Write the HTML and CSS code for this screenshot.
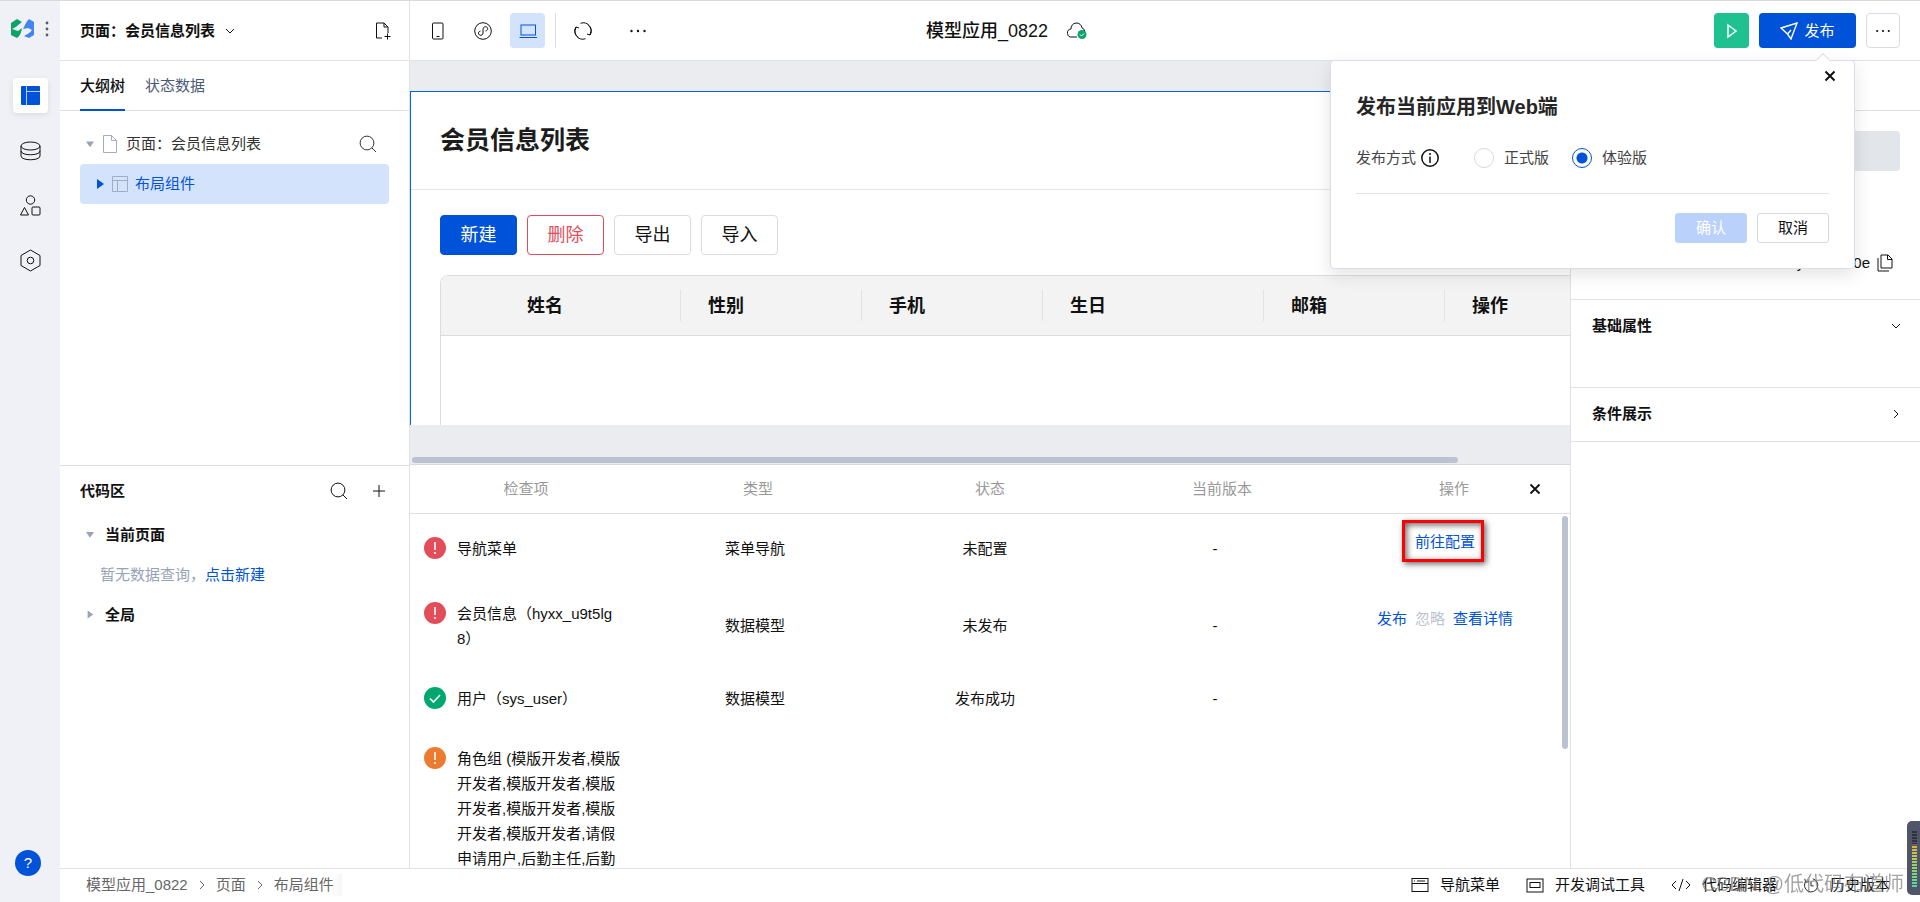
FILE: index.html
```html
<!DOCTYPE html>
<html lang="zh-CN">
<head>
<meta charset="utf-8">
<title>模型应用_0822</title>
<link rel="stylesheet" href="styles.css">
</head>
<body>
<svg class="defs" aria-hidden="true">
  <symbol id="search" viewBox="0 0 18 18"><circle cx="8" cy="8" r="6.900"/><path d="M13 13l4 4"/></symbol>
  <symbol id="close" viewBox="0 0 12 12"><path d="M1.500 1.500l9 9M10.500 1.500l-9 9"/></symbol>
  <symbol id="more" viewBox="0 0 18 18"><g fill="currentColor" stroke="none"><circle cx="2.500" cy="9" r="1.200"/><circle cx="9" cy="9" r="1.200"/><circle cx="15.500" cy="9" r="1.200"/></g></symbol>
  <symbol id="chev-right" viewBox="0 0 10 10"><path d="M3 1l4 4-4 4"/></symbol>
  <symbol id="chev-down" viewBox="0 0 10 10"><path d="M1 3l4 4 4-4"/></symbol>
  <symbol id="alert" viewBox="0 0 22 22"><circle cx="11" cy="11" r="11" fill="currentColor" stroke="none"/><path d="M11 5v8M11 15v2" stroke="#fff" stroke-width="1.600"/></symbol>
</svg>
<div class="app">
  <nav class="rail" aria-label="主导航">
    <div class="brand">
      <svg width="24" height="20" viewBox="0 0 24 20"><path fill="#0ba56b" d="M0 4l6-4 5 3C8 5 6 8 1 10l6 2 4-3c-1 5-2 8-5 10l-6-3z"/><path fill="#4285ee" d="M18 0l5 3v13l-5 3-5-2c3-2 6-3 8-6l-4-2-5 1c2-4 3-7 6-10z"/></svg>
      <svg width="4" height="16" viewBox="0 0 4 16"><g fill="#555b6a"><circle cx="2" cy="2" r="1.400"/><circle cx="2" cy="8" r="1.400"/><circle cx="2" cy="14" r="1.400"/></g></svg>
    </div>
    <button class="rail-btn active" aria-label="页面设计"><svg width="19" height="19" viewBox="0 0 19 19"><rect width="19" height="19" rx="1" fill="#0052d9" stroke="none"/><path d="M5.500 0v19M5.500 5.500H19" stroke="#b5ccf5"/></svg></button>
    <button class="rail-btn" aria-label="数据源"><svg width="21" height="20" viewBox="0 0 21 20"><ellipse cx="10.500" cy="5" rx="9.500" ry="4"/><path d="M1 5v10c0 5 19 5 19 0V5M1 10c0 5 19 5 19 0"/></svg></button>
    <button class="rail-btn" aria-label="组件"><svg width="21" height="21" viewBox="0 0 21 21"><circle cx="10.500" cy="5" r="4.200"/><path d="M4.500 12.500l4 7.500h-8z"/><rect x="12" y="12" width="8" height="8" rx="1"/></svg></button>
    <button class="rail-btn" aria-label="设置"><svg width="21" height="23" viewBox="0 0 21 23"><path d="M10.500 1L20 6.500v10L10.500 22 1 16.500v-10z"/><circle cx="10.500" cy="11.500" r="3.300"/></svg></button>
    <button class="help" aria-label="帮助">?</button>
  </nav>

  <header class="topbar">
    <div class="page-pick">
      <button class="page-name">页面：会员信息列表<svg width="10" height="10"><use href="#chev-down"/></svg></button>
      <button class="plain" aria-label="新建页面"><svg width="16" height="18" viewBox="0 0 16 18"><path d="M7 16H1.500V1H9l4 4v6M9 1v4h4M12.500 11.500v6M9.500 14.500h6"/></svg></button>
    </div>
    <div class="tools">
      <button class="tool" aria-label="手机"><svg width="18" height="18" viewBox="0 0 18 18"><rect x="3.500" y="1" width="10.500" height="16" rx="1"/><path d="M7.500 14.500h3"/></svg></button>
      <button class="tool" aria-label="小程序"><svg width="18" height="18" viewBox="0 0 18 18"><circle cx="9" cy="9" r="8.300"/><path d="M6.500 9C3.500 9.500 4 13.500 6.800 13.300 9 13.100 9 11.500 9 10V8c0-2 .5-3.300 2.500-3.300 2.800 0 3 3.700 0 4.300"/></svg></button>
      <button class="tool active" aria-label="桌面"><svg width="18" height="18" viewBox="0 0 18 18"><rect x="2" y="3" width="14.500" height="10"/><path d="M.5 15.500h17.500"/></svg></button>
      <span class="split"></span>
      <button class="tool refresh" aria-label="刷新"><svg width="18" height="18" viewBox="0 0 18 18"><path d="M6.500 1.300A8 8 0 0 1 16 13M11.500 16.700A8 8 0 0 1 2 5M4.500 15.700A8 8 0 0 1 2 5M13.500 2.300A8 8 0 0 1 16 13M2 5l-.8 3M2 5l3 1M16 13l.8-3M16 13l-3-1"/></svg></button>
      <button class="tool" aria-label="更多"><svg width="18" height="18"><use href="#more"/></svg></button>
    </div>
    <h1 class="app-name">模型应用_0822<svg width="20" height="18" viewBox="0 0 20 18"><path d="M10 15H5a4 4 0 0 1-1-8 5.500 5.500 0 0 1 11-1c1.500.5 2.500 1.500 2.700 3"/><circle cx="15" cy="12.500" r="4.500" fill="#0ba56b" stroke="none"/><path d="M13 12.500l1.500 1.500 2.500-2.500" stroke="#fff"/></svg></h1>
    <div class="actions">
      <button class="run" aria-label="预览"><svg width="14" height="16" viewBox="0 0 14 16"><path d="M3 2l8 6-8 6z"/></svg></button>
      <button class="publish"><svg width="18" height="18" viewBox="0 0 18 18"><path d="M1 6l16-5-6 16-3.500-5zM7.500 12l3.500-4"/></svg>发布</button>
      <button class="menu" aria-label="更多操作"><svg width="16" height="18"><use href="#more"/></svg></button>
    </div>
    <section class="popup">
      <span class="arrow"></span>
      <button class="plain popup-close" aria-label="关闭"><svg width="12" height="12"><use href="#close"/></svg></button>
      <h2>发布当前应用到Web端</h2>
      <div class="mode">
        <span class="mode-name">发布方式<svg width="18" height="18" viewBox="0 0 18 18"><circle cx="9" cy="9" r="8.200"/><path d="M9 7.500V14M9 4v2"/></svg></span>
        <label><input type="radio" name="mode">正式版</label>
        <label><input type="radio" name="mode" checked>体验版</label>
      </div>
      <div class="popup-foot"><button class="ok" disabled>确认</button><button>取消</button></div>
    </section>
  </header>

  <aside class="left">
    <section class="outline">
      <div class="tabs"><button class="tab on">大纲树</button><button class="tab">状态数据</button></div>
      <div class="tree">
        <div class="node"><i class="caret down"></i><svg class="soft" width="14" height="18" viewBox="0 0 14 18"><path d="M.5.5h8l5 5v12H.5zM8.500.5v5h5"/></svg>页面：会员信息列表<button class="plain find" aria-label="搜索"><svg width="18" height="18"><use href="#search"/></svg></button></div>
        <div class="node picked"><i class="caret"></i><svg class="soft" width="16" height="16" viewBox="0 0 16 16"><path d="M.5.5h15v15H.5zM.5 4.500h15M5.500 4.500v11"/></svg>布局组件</div>
      </div>
    </section>
    <section class="code">
      <div class="code-head"><b>代码区</b><button class="plain" aria-label="搜索代码"><svg width="18" height="18"><use href="#search"/></svg></button><button class="plain" aria-label="新增"><svg width="14" height="14" viewBox="0 0 14 14"><path d="M7 1v12M1 7h12"/></svg></button></div>
      <div class="group"><i class="caret down"></i><b>当前页面</b></div>
      <p class="hint">暂无数据查询，<a href="#">点击新建</a></p>
      <div class="group"><i class="caret"></i><b>全局</b></div>
    </section>
  </aside>

  <main class="center">
    <div class="stage">
      <div class="page">
        <h2 class="page-title">会员信息列表</h2>
        <div class="page-body">
          <div class="btns"><button class="primary">新建</button><button class="danger">删除</button><button>导出</button><button>导入</button></div>
          <table class="grid">
            <thead><tr><th class="pick"></th><th>姓名</th><th>性别</th><th>手机</th><th class="wide">生日</th><th>邮箱</th><th>操作</th></tr></thead>
            <tbody><tr><td colspan="7"></td></tr></tbody>
          </table>
        </div>
      </div>
      <div class="hbar"><span></span></div>
    </div>
    <section class="checks">
      <table class="check-table check-head"><thead><tr><th>检查项</th><th>类型</th><th>状态</th><th>当前版本</th><th>操作</th></tr></thead></table>
      <button class="plain checks-close" aria-label="关闭检查"><svg width="12" height="12"><use href="#close"/></svg></button>
      <div class="check-scroll">
        <table class="check-table">
          <tbody>
            <tr><td><div class="item red"><svg width="22" height="22"><use href="#alert"/></svg><span>导航菜单</span></div></td><td>菜单导航</td><td>未配置</td><td>-</td><td><div class="ops"><span class="marked"><a href="#">前往配置</a></span></div></td></tr>
            <tr><td><div class="item red"><svg width="22" height="22"><use href="#alert"/></svg><span>会员信息（hyxx_u9t5lg8）</span></div></td><td>数据模型</td><td>未发布</td><td>-</td><td><div class="ops"><a href="#">发布</a><span class="off">忽略</span><a href="#">查看详情</a></div></td></tr>
            <tr><td><div class="item green"><svg width="22" height="22" viewBox="0 0 22 22"><circle cx="11" cy="11" r="11" fill="currentColor" stroke="none"/><path d="M6 11.500l3.500 3.500L16 8" stroke="#fff" stroke-width="1.600"/></svg><span>用户（sys_user）</span></div></td><td>数据模型</td><td>发布成功</td><td>-</td><td></td></tr>
            <tr><td><div class="item orange"><svg width="22" height="22"><use href="#alert"/></svg><span>角色组 (模版开发者,模版开发者,模版开发者,模版开发者,模版开发者,模版开发者,模版开发者,请假申请用户,后勤主任,后勤</span></div></td><td></td><td></td><td></td><td></td></tr>
          </tbody>
        </table>
        <span class="vbar"></span>
      </div>
    </section>
  </main>

  <aside class="right">
    <div class="right-tabs"></div>
    <div class="summary"><div class="chip"></div><div class="ident"><span>y</span><span>0e</span><button class="plain" aria-label="复制"><svg width="16" height="18" viewBox="0 0 16 18"><path d="M4 1h7l4 4v9H4zM10.500 1v4.500H15M1 4v13h11"/></svg></button></div></div>
    <button class="fold open">基础属性<svg width="10" height="10"><use href="#chev-down"/></svg></button>
    <button class="fold">条件展示<svg width="10" height="10"><use href="#chev-right"/></svg></button>
  </aside>

  <footer class="foot">
    <nav class="crumbs" aria-label="路径"><a href="#">模型应用_0822</a><svg width="10" height="10"><use href="#chev-right"/></svg><a href="#">页面</a><svg width="10" height="10"><use href="#chev-right"/></svg><a href="#">布局组件</a></nav>
    <div class="foot-tools">
      <button><svg width="18" height="16" viewBox="0 0 18 16"><rect x="1" y="1.500" width="16" height="13"/><path d="M1 6.500h16M3 4h1M6 4h8"/></svg>导航菜单</button>
      <button><svg width="18" height="16" viewBox="0 0 18 16"><rect x="1" y="2" width="16" height="13"/><rect x="4" y="5.500" width="10" height="5"/></svg>开发调试工具</button>
      <button><svg width="20" height="16" viewBox="0 0 20 16"><path d="M5 4L1 8l4 4M15 4l4 4-4 4M12 2L8 14"/></svg>代码编辑器</button>
      <button><svg width="16" height="18" viewBox="0 0 18 18"><path d="M3 5A7.500 7.500 0 1 0 11 2M9 5v5h3M2 2l1 4 4-1"/></svg>历史版本</button>
    </div>
  </footer>
</div>
<div class="watermark">CSDN @低代码布道师</div>
<div class="meter"><span></span></div>
</body>
</html>
```

FILE: styles.css
```css
* { box-sizing: border-box; }
body, h1, h2, p { margin: 0; }
body {
  font: 15px/22px "Liberation Sans", "Noto Sans CJK SC", sans-serif;
  color: #111;
  background: #fff;
  overflow: hidden;
}
button { font: inherit; color: inherit; margin: 0; padding: 0; background: none; border: 0; }
a { color: #0052d9; text-decoration: none; }
svg { fill: none; stroke: currentColor; flex: none; }
.defs { display: none; }
.plain { display: flex; }

.app {
  display: grid;
  grid-template: 60px 1fr 34px / 60px 350px 1fr 350px;
  height: 100vh;
  border-top: 1px solid #dadada;
}

/* Icon rail */
.rail {
  grid-row: 1 / 4;
  display: flex;
  flex-direction: column;
  align-items: center;
  gap: 20px;
  padding: 18px 0 26px;
  background: #eff1f6;
}
.brand { display: flex; align-items: center; gap: 10px; margin-bottom: 19px; }
.brand svg { stroke: none; }
.rail-btn { width: 35px; height: 35px; display: grid; place-items: center; border-radius: 4px; stroke-width: 1; }
.rail-btn.active { background: #fff; box-shadow: 0 2px 6px #00000018; }
.help { width: 26px; height: 26px; margin: auto 4px 0 0; border-radius: 50%; background: #0052d9; color: #fff; align-self: center; }

/* Top bar */
.topbar {
  grid-column: 2 / 5;
  position: relative;
  display: flex;
  align-items: center;
  border-bottom: 1px solid #e0e2e8;
}
.page-pick {
  width: 350px;
  height: 100%;
  display: flex;
  align-items: center;
  justify-content: space-between;
  padding: 0 18px 0 20px;
  border-right: 1px solid #e0e2e8;
}
.page-name { display: flex; align-items: center; gap: 10px; font-weight: bold; }
.tools { display: flex; align-items: center; gap: 10px; padding-left: 10px; }
.tool { width: 35px; height: 35px; display: grid; place-items: center; border-radius: 4px; }
.tool.active { background: #d4e3fc; color: #0052d9; }
.split { width: 1px; height: 35px; margin-right: -1px; background: #dcdfe5; }
.refresh { margin-right: 10px; }
.app-name { margin-left: 271px; display: flex; align-items: center; gap: 19px; font-size: 18px; font-weight: 500; }
.actions { margin-left: auto; padding-right: 20px; display: flex; gap: 10px; }
.actions button { height: 35px; min-width: 34px; display: flex; align-items: center; justify-content: center; gap: 6px; border-radius: 4px; }
.actions .run { width: 35px; background: #20c191; color: #fff; stroke-width: 1.5; }
.actions .publish { background: #0052d9; color: #fff; width: 97px; stroke-width: 1.4; }
.actions .menu { border: 1px solid #d9dbe6; }

/* Publish popup */
.popup {
  position: absolute;
  z-index: 2;
  top: 59px;
  right: 65px;
  width: 525px;
  padding: 31px 25px 25px;
  background: #fff;
  border: 1px solid #dadee8;
  border-radius: 4px;
  box-shadow: 0 6px 18px #0000001c;
}
.arrow {
  position: absolute;
  top: -6px;
  right: 26px;
  width: 10px;
  height: 10px;
  background: #fff;
  border: solid #dadee8;
  border-width: 1px 0 0 1px;
  transform: rotate(45deg);
}
.popup-close { position: absolute; top: 9px; right: 18px; stroke-width: 2; }
.popup h2 { font-size: 20px; line-height: 30px; color: #262626; }
.mode { display: flex; align-items: center; color: #444; height: 72px; border-bottom: 1px solid #e2e4e8; }
.mode-name { display: flex; align-items: center; gap: 5px; margin-right: 35px; }
.mode-name svg { color: #111; stroke-width: 1.5; }
.mode label { display: flex; align-items: center; gap: 10px; margin-right: 23px; }
.mode input { appearance: none; width: 20px; height: 20px; margin: 0; border: 1px solid #d5d8e2; border-radius: 50%; }
.mode input:checked { border-color: #0052d9; background: radial-gradient(#0052d9 5px, #fff 6px); }
.popup-foot { display: flex; justify-content: flex-end; gap: 10px; padding-top: 19px; }
.popup-foot button { width: 72px; height: 30px; border: 1px solid #d5d8e2; border-radius: 3px; }
.popup-foot .ok { background: #bad2fb; border-color: #bad2fb; color: #fff; }

/* Left panel */
.left { grid-column: 2; display: grid; grid-template-rows: 404fr 404fr; border-right: 1px solid #e0e2e8; min-height: 0; }
.tabs { display: flex; gap: 20px; padding: 0 20px; height: 50px; border-bottom: 1px solid #e0e2e8; }
.tab { height: 50px; padding-top: 2px; color: #4b5b76; border-bottom: 2px solid transparent; }
.tab.on { color: #111; font-weight: 500; border-color: #0052d9; }
.tree { padding: 13px 20px 0; }
.node { display: flex; align-items: center; gap: 9px; height: 40px; padding: 0 12px 0 6px; color: #333; border-radius: 4px; }
.node.picked { padding-left: 15px; gap: 7px; background: #d4e3fc; color: #0052d9; }
.find { margin-left: auto; }
.soft { color: #a3adbd; }
.caret { flex: none; width: 8px; height: 8px; background: #97a3b7; clip-path: polygon(20% 0, 90% 50%, 20% 100%); }
.caret.down { clip-path: polygon(0 20%, 100% 20%, 50% 90%); }
.picked .caret { width: 10px; height: 10px; background: #0052d9; }
.code { border-top: 1px solid #d8dce8; padding: 4px 20px 0; }
.code-head { display: flex; align-items: center; height: 42px; gap: 24px; padding-right: 3px; margin-bottom: 3px; }
.code-head b { margin-right: auto; }
.group { display: flex; align-items: center; height: 40px; padding-left: 6px; gap: 11px; }
.hint { padding-left: 20px; line-height: 40px; color: #97a3b7; }

/* Canvas */
.center { display: flex; flex-direction: column; min-width: 0; min-height: 0; }
.stage { height: 50%; min-height: 0; display: flex; flex-direction: column; padding-top: 30px; background: #ebecf0; border-bottom: 1px solid #dadada; overflow: hidden; }
.page { flex: 1; min-height: 0; width: 1400px; background: #fff; border: solid #0063f0; border-width: 1px 0 0 1px; overflow: hidden; }
.page-title { padding: 0 29px; font-size: 25px; line-height: 97px; color: #1c1c1c; border-bottom: 1px solid #e5e5e5; }
.page-body { padding: 25px 29px; }
.btns { display: flex; gap: 10px; font-size: 18px; margin-bottom: 20px; }
.btns button { width: 77px; height: 40px; border: 1px solid #dcdcdc; border-radius: 4px; }
.btns .primary { background: #0052d9; border-color: #0052d9; color: #fff; }
.btns .danger { color: #e34d59; border-color: #e34d59; }
.grid { width: 100%; table-layout: fixed; border: 1px solid #dcdcdc; border-radius: 8px; border-spacing: 0; overflow: hidden; }
.grid th {
  height: 60px;
  width: 181px;
  padding: 0 27px;
  font-size: 18px;
  text-align: left;
  background: linear-gradient(#e2e2e2, #e2e2e2) right center / 1px 31px no-repeat #f3f3f3;
  border-bottom: 1px solid #dcdcdc;
}
.grid .pick { width: 59px; background: #f3f3f3; }
.grid .wide { width: 221px; }
.grid th:last-child { width: auto; }
.grid td { height: 160px; }
.hbar { height: 39px; display: flex; align-items: flex-end; padding: 0 112px 1px 2px; width: 100%; }
.hbar span { flex: 1; height: 6px; border-radius: 3px; background: #bac3cf; }

/* Check list */
.checks { position: relative; flex: 1; min-height: 0; display: flex; flex-direction: column; }
.check-table { width: 100%; table-layout: fixed; border-spacing: 0; }
.check-head { border-bottom: 1px solid #dcdee2; }
.check-head th { height: 48px; padding: 0; font-weight: normal; color: #999; }
.checks-close { position: absolute; top: 18px; right: 29px; stroke-width: 1.8; }
.check-scroll { position: relative; flex: 1; min-height: 0; overflow: hidden; padding-right: 10px; }
.check-table td { padding: 17px 0 18px; line-height: 25px; text-align: center; }
.item { display: flex; align-items: flex-start; gap: 11px; padding-left: 14px; text-align: left; }
.item svg { margin-top: 1px; }
.item span { width: 166px; word-break: break-all; color: #111; }
.red { color: #e34d59; }
.green { color: #00a870; }
.orange { color: #ed7b2f; }
.ops { display: flex; justify-content: center; gap: 8px; line-height: 22px; padding-bottom: 13px; }
.off { color: #bbc3d0; }
.marked { position: relative; }
.marked::after { content: ""; position: absolute; inset: -11px -9px -9px -13px; border: 3px solid #f00; box-shadow: 2px 2px 6px #00000099, inset 2px 2px 6px #00000099; }
.vbar { position: absolute; top: 2px; right: 2px; width: 6px; height: 66%; border-radius: 3px; background: #bac3cf; }

/* Right panel */
.right { border-left: 1px solid #e0e2e8; }
.right-tabs { height: 50px; border-bottom: 1px solid #e0e2e8; }
.summary { height: 189px; padding: 20px 20px 0; border-bottom: 1px solid #e0e2e8; }
.chip { height: 40px; border-radius: 4px; background: #e2e5ea; }
.ident { display: flex; justify-content: flex-end; align-items: center; gap: 7px; margin-top: 81px; padding-right: 7px; }
.ident span:first-child { margin-right: 42px; }
.fold { display: flex; width: 100%; height: 54px; align-items: center; justify-content: space-between; padding: 0 19px 2px 21px; font-weight: bold; border-bottom: 1px solid #e0e2e8; }
.fold.open { height: 88px; padding-bottom: 36px; }

/* Status bar */
.foot { grid-column: 2 / 5; display: flex; align-items: center; justify-content: space-between; padding: 0 30px 2px 26px; border-top: 1px solid #e0e2ea; }
.crumbs, .foot-tools, .foot-tools button { display: flex; align-items: center; }
.crumbs { gap: 9px; padding-right: 8px; background: linear-gradient(90deg, #fff 96%, #f5f6f8); }
.crumbs, .crumbs a { color: #666; }
.foot-tools { gap: 26px; }
.foot-tools button { gap: 11px; }

.watermark { position: fixed; right: 16px; bottom: 4px; font-size: 20px; line-height: 28px; color: #777a; }
.meter { position: fixed; right: 0; bottom: 7px; width: 13px; height: 74px; padding: 9px 3px 8px 5px; background: #50566a; border-radius: 5px 0 0 5px; }
.meter span { display: block; height: 100%; background: repeating-linear-gradient(#50566a 0 1px, transparent 1px 3px), linear-gradient(#30333f 25%, #e0b040 26%, #b8cc55 50%, #50d8a0); }
```
